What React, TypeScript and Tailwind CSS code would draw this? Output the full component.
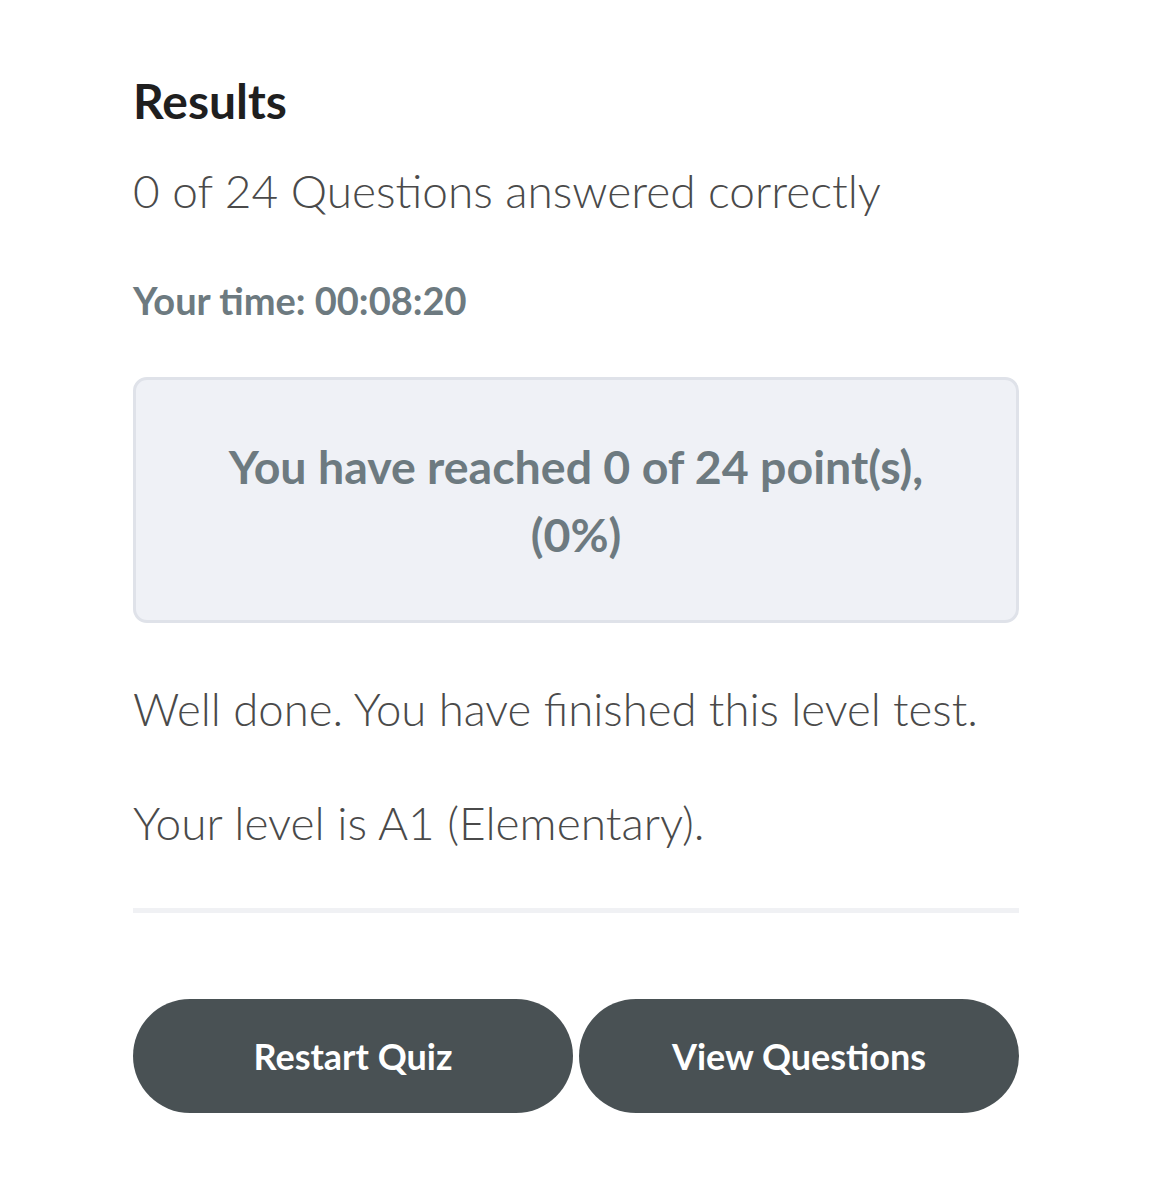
import React from "react";

export default function App() {
  return (
    <div className="min-h-[1200px] bg-white" style={{ fontFamily: "Lato, 'Noto Sans', sans-serif" }}>
      <div className="ml-[133px] w-[886px] pt-[71px]">
        <h1 className="text-[48px] font-bold leading-[60px] text-[#1f1f1f]">Results</h1>
        <p className="mt-[30px] text-[46px] font-light leading-[60px] text-[#4a4a4a]">0 of 24 Questions answered correctly</p>
        <p className="mt-[54px] text-[38px] font-bold leading-[50px] text-[#6d7a80]">Your time: 00:08:20</p>
        <div className="mt-[52px] flex h-[246px] items-center justify-center rounded-[14px] border-[3px] border-[#dfe2e9] bg-[#eff1f6] px-8">
          <p className="text-center text-[46.5px] font-bold leading-[68px] text-[#6d7a80]">
            You have reached 0 of 24 point(s),
            <br />
            (0%)
          </p>
        </div>
        <p className="mt-[56px] text-[45.5px] font-light leading-[60px] text-[#4a4a4a]">Well done. You have finished this level test.</p>
        <p className="mt-[54px] text-[46px] font-light leading-[60px] text-[#4a4a4a]">Your level is A1 (Elementary).</p>
        <div className="mt-[55px] h-[5px] bg-[#f0f1f4]" />
        <div className="mt-[86px] flex gap-[6px]">
          <button className="flex h-[114px] flex-1 items-center justify-center rounded-full bg-[#495154] text-[36px] font-bold text-white">Restart Quiz</button>
          <button className="flex h-[114px] flex-1 items-center justify-center rounded-full bg-[#495154] text-[36px] font-bold text-white">View Questions</button>
        </div>
      </div>
    </div>
  );
}
